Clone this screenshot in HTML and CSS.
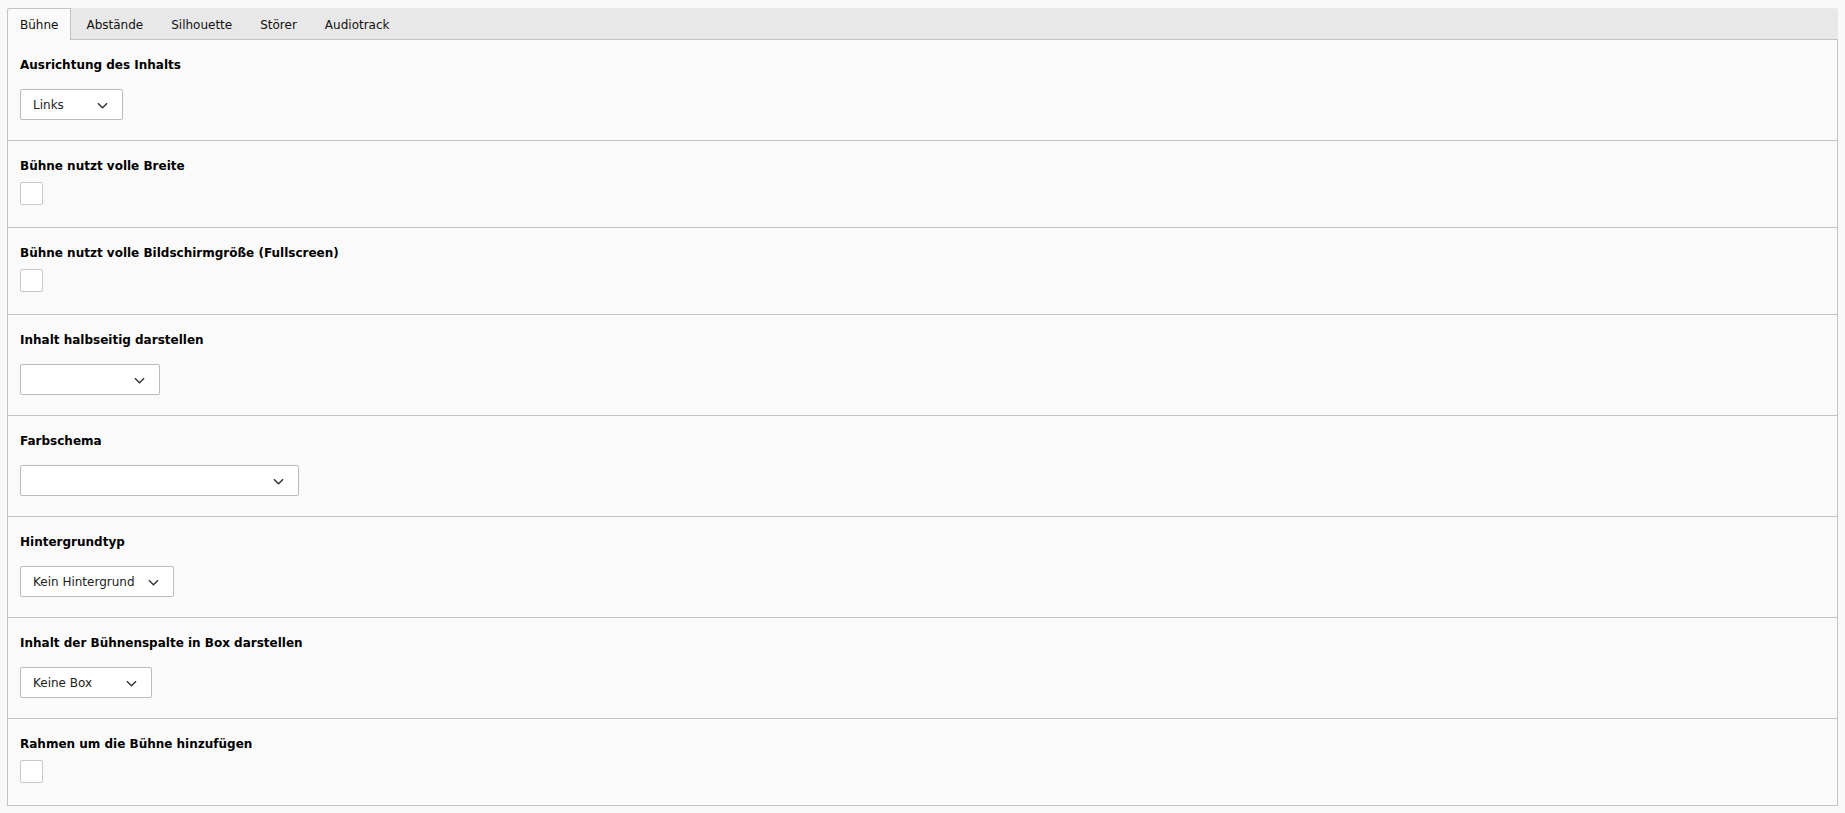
FILE: index.html
```html
<!DOCTYPE html>
<html lang="de">
<head>
    <meta charset="UTF-8">
    <meta name="viewport" content="width=device-width, initial-scale=1.0">
    <title>Bühne</title>
    <link rel="stylesheet" href="styles.css">
</head>
<body>
    <div class="panel">
        <ul class="tabs">
            <li class="tab active">Bühne</li>
            <li class="tab">Abstände</li>
            <li class="tab">Silhouette</li>
            <li class="tab">Störer</li>
            <li class="tab">Audiotrack</li>
        </ul>
        <div class="content">
            <div class="section">
                <label>Ausrichtung des Inhalts</label>
                <div class="select w-links"><span>Links</span>
                    <svg class="chevron" viewBox="0 0 12 7"><path d="M1 1l5 5 5-5"/></svg></div>
            </div>
            <div class="section check">
                <label>Bühne nutzt volle Breite</label>
                <div class="checkbox"></div>
            </div>
            <div class="section check">
                <label>Bühne nutzt volle Bildschirmgröße (Fullscreen)</label>
                <div class="checkbox"></div>
            </div>
            <div class="section">
                <label>Inhalt halbseitig darstellen</label>
                <div class="select w-half"><span></span>
                    <svg class="chevron" viewBox="0 0 12 7"><path d="M1 1l5 5 5-5"/></svg></div>
            </div>
            <div class="section">
                <label>Farbschema</label>
                <div class="select w-color"><span></span>
                    <svg class="chevron" viewBox="0 0 12 7"><path d="M1 1l5 5 5-5"/></svg></div>
            </div>
            <div class="section">
                <label>Hintergrundtyp</label>
                <div class="select w-bg"><span>Kein Hintergrund</span>
                    <svg class="chevron" viewBox="0 0 12 7"><path d="M1 1l5 5 5-5"/></svg></div>
            </div>
            <div class="section">
                <label>Inhalt der Bühnenspalte in Box darstellen</label>
                <div class="select w-box"><span>Keine Box</span>
                    <svg class="chevron" viewBox="0 0 12 7"><path d="M1 1l5 5 5-5"/></svg></div>
            </div>
            <div class="section check">
                <label>Rahmen um die Bühne hinzufügen</label>
                <div class="checkbox"></div>
            </div>
        </div>
    </div>
</body>
</html>
```

FILE: styles.css
```css
body {
    margin: 0;
    background-color: #f9f9f9;
    font-family: Verdana, "DejaVu Sans", sans-serif;
    font-size: 12px;
    color: #000;
}
.panel {
    margin: 8px 7px;
}
.tabs {
    display: flex;
    margin: 0;
    padding: 0;
    list-style: none;
    background-color: #e8e8e8;
    border-bottom: 1px solid #c3c3c3;
    border-radius: 3px 3px 0 0;
}
.tab {
    padding: 8px 12px 6px;
    line-height: 16px;
    border: 1px solid transparent;
    border-bottom: none;
    margin-bottom: -1px;
    margin-right: 2px;
    color: #111;
}
.tab.active {
    background-color: #fafafa;
    border-color: #c3c3c3;
    border-radius: 3px 0 0 0;
    padding-bottom: 7px;
}
.content {
    background-color: #fafafa;
    border: 1px solid #c3c3c3;
    border-top: none;
}
.section {
    padding: 17px 12px 20px;
    border-bottom: 1px solid #c3c3c3;
}
.section:last-child {
    border-bottom: none;
}
.section label {
    display: block;
    font-weight: bold;
    line-height: 16px;
    margin-bottom: 16px;
}
.section.check label {
    margin-bottom: 8px;
}
.select {
    display: flex;
    align-items: center;
    justify-content: space-between;
    box-sizing: border-box;
    height: 31px;
    padding: 1px 14px 0 12px;
    background-color: #fff;
    border: 1px solid #bbb;
    border-radius: 2px;
    color: #222;
}
.chevron {
    width: 11px;
    height: 7px;
    fill: none;
    stroke: #333;
    stroke-width: 1.5;
}
.w-links { width: 103px; }
.w-half { width: 140px; }
.w-color { width: 279px; }
.w-bg { width: 154px; }
.w-box { width: 132px; }
.checkbox {
    width: 23px;
    height: 23px;
    box-sizing: border-box;
    background-color: #fff;
    border: 1px solid #c8c8c8;
    border-radius: 2px;
    margin-bottom: 2px;
}
```
